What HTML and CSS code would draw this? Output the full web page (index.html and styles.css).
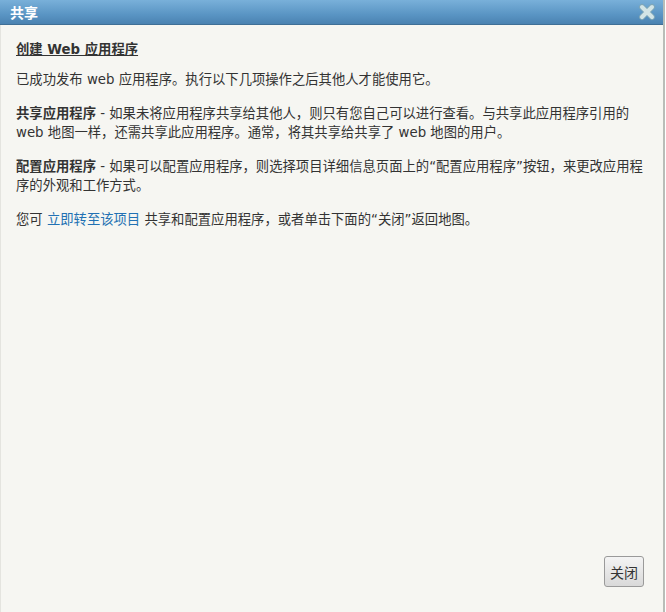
FILE: index.html
```html
<!DOCTYPE html>
<html lang="zh-CN">
<head>
    <meta charset="UTF-8">
    <title>共享</title>
    <link rel="stylesheet" href="styles.css">
</head>
<body>

<div class="dialog">
    <div class="titlebar">
        <span class="title">共享</span>
        <svg class="close-x" width="18" height="18" viewBox="0 0 18 18">
            <path d="M4 4 L14 14 M14 4 L4 14" stroke="#7fa7b8" stroke-width="6" stroke-linecap="round"/>
            <path d="M4 4 L14 14 M14 4 L4 14" stroke="#d3e5e6" stroke-width="4" stroke-linecap="round"/>
        </svg>
    </div>

    <div class="content">
        <h3 class="heading">创建 Web 应用程序</h3>
        <p>已成功发布 web 应用程序。执行以下几项操作之后其他人才能使用它。</p>
        <p><b>共享应用程序</b> - 如果未将应用程序共享给其他人，则只有您自己可以进行查看。与共享此应用程序引用的 web 地图一样，还需共享此应用程序。通常，将其共享给共享了 web 地图的用户。</p>
        <p><b>配置应用程序</b> - 如果可以配置应用程序，则选择项目详细信息页面上的“配置应用程序”按钮，来更改应用程序的外观和工作方式。</p>
        <p>您可 <a href="#">立即转至该项目</a> 共享和配置应用程序，或者单击下面的“关闭”返回地图。</p>

        <div class="footer">
            <button class="btn">关闭</button>
        </div>
    </div>
</div>

</body>
</html>
```

FILE: styles.css
```css
body {
    margin: 0;
    background-color: #ffffff;
    font-family: "DejaVu Sans", "Noto Sans CJK SC", sans-serif;
}

.dialog {
    width: 663px;
    height: 612px;
    display: flex;
    flex-direction: column;
    border-right: 2px solid #b9bdb8;
    background-color: #f6f6f2;
}

.titlebar {
    height: 24px;
    display: flex;
    align-items: center;
    justify-content: space-between;
    padding: 0 7px 0 10px;
    background: linear-gradient(#79b0d9, #5a95c4 60%, #4a82b1);
    border-bottom: 1px solid #3f6f96;
}

.title {
    color: #ffffff;
    font-size: 14px;
    font-weight: bold;
}

.content {
    flex: 1;
    display: flex;
    flex-direction: column;
    padding: 15px 19px 25px 15px;
    color: #333333;
    font-size: 13.33px;
    line-height: 19px;
    border-left: 1px solid #e4e4df;
}

.heading {
    margin: 0 0 11px 0;
    font-size: 13.33px;
    text-decoration: underline;
    color: #333333;
}

.content p {
    margin: 0 0 15px 0;
}

.content a {
    color: #2271b3;
    text-decoration: none;
}

.footer {
    margin-top: auto;
    display: flex;
    justify-content: flex-end;
}

.btn {
    width: 40px;
    height: 31px;
    padding: 0;
    font-family: "Noto Sans CJK SC", sans-serif;
    font-size: 14px;
    color: #333333;
    background: linear-gradient(#f4f4f4, #d9d9d9);
    border: 1px solid #9a9a9a;
    border-radius: 3px;
}
```
